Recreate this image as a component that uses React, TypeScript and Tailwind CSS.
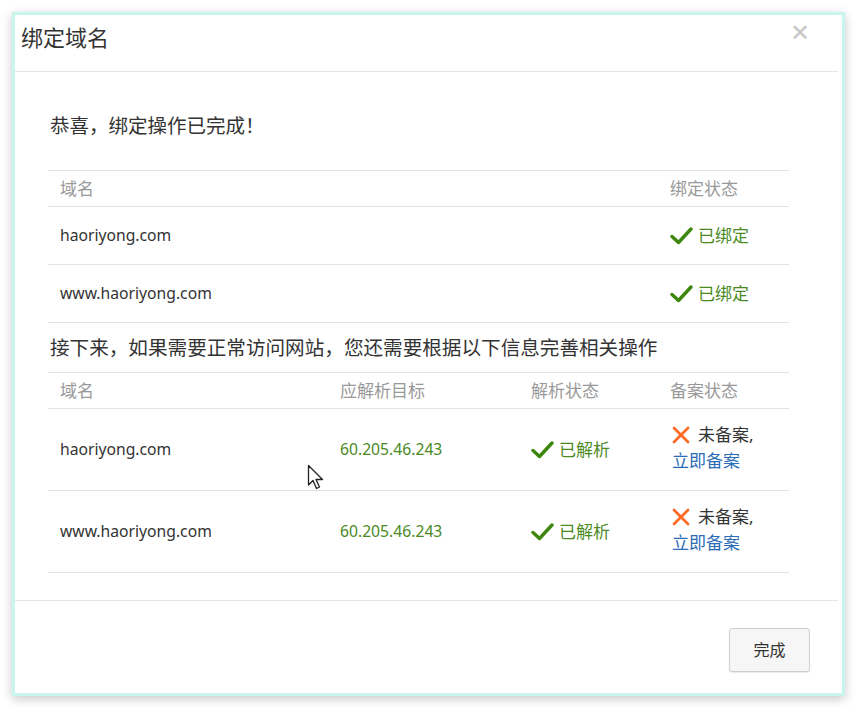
import React from 'react';

const cjk = { fontFamily: '"Noto Sans", "Noto Sans CJK SC", sans-serif' };

const Check = () => (
  <svg width="23" height="20" viewBox="0 0 23 20" className="shrink-0">
    <path d="M2 10.5 L8.5 16.5 L21 3" fill="none" stroke="#3d870f" strokeWidth="3.4" strokeLinecap="round" strokeLinejoin="round" />
  </svg>
);

const Cross = () => (
  <svg width="18" height="18" viewBox="0 0 18 18" className="shrink-0">
    <path d="M2 2 L16 16 M16 2 L2 16" stroke="#ff6a24" strokeWidth="2.8" strokeLinecap="round" />
  </svg>
);

const Cursor = () => (
  <svg width="20" height="28" viewBox="0 0 20 28" className="absolute left-[307px] top-[464px]">
    <path d="M1.5 1.5 L1.5 21 L6 16.5 L9.5 24.5 L12.5 23 L9 15.5 L15.5 15.5 Z" fill="#fff" stroke="#222" strokeWidth="1.3" strokeLinejoin="round" />
  </svg>
);

const bound = [
  { domain: 'haoriyong.com' },
  { domain: 'www.haoriyong.com' },
];

const resolve = [
  { domain: 'haoriyong.com', ip: '60.205.46.243' },
  { domain: 'www.haoriyong.com', ip: '60.205.46.243' },
];

export default function App() {
  return (
    <div className="relative w-[857px] h-[708px] bg-white" style={cjk}>
      <div className="absolute left-[12px] top-[12px] w-[833px] h-[684px] border-[3px] border-[#c9f6ec] bg-white shadow-[0_3px_10px_rgba(0,0,0,0.22)] flex flex-col">
        {/* header */}
        <div className="h-[57px] shrink-0 border-b border-[#e5e5e5] flex items-start justify-between pt-[7px] pl-[6px] pr-[28px] mr-[4px]">
          <span className="text-[22px] leading-[30px] text-[#333]">绑定域名</span>
          <span className="text-[24px] leading-[24px] -mt-[2px] text-[#c8c8c8] font-light">✕</span>
        </div>

        {/* body */}
        <div className="flex-1 px-[33px] pt-[41px] pb-[27px] border-b border-[#e5e5e5] mr-[4px]">
          <div className="text-[19.5px] leading-[26px] text-[#333] pl-[2px]">恭喜，绑定操作已完成！</div>

          <div className="mt-[31px] w-[741px] text-[17px]">
            <div className="grid grid-cols-[622px_1fr] h-[37px] items-center border-y border-[#e3e3e3] text-[#999]">
              <span className="pl-[12px]">域名</span>
              <span>绑定状态</span>
            </div>
            {bound.map((row) => (
              <div key={row.domain} className="grid grid-cols-[622px_1fr] h-[58px] items-center border-b border-[#e3e3e3]">
                <span className="pl-[12px] text-[15.7px] text-[#333]">{row.domain}</span>
                <span className="flex items-center gap-[5px] text-[#4b8a1f]">
                  <Check />
                  已绑定
                </span>
              </div>
            ))}
          </div>

          <div className="mt-[12px] text-[19.6px] leading-[26px] text-[#333] pl-[2px]">
            接下来，如果需要正常访问网站，您还需要根据以下信息完善相关操作
          </div>

          <div className="mt-[11px] w-[741px] text-[17px]">
            <div className="grid grid-cols-[280px_191px_139px_1fr] h-[37px] items-center border-y border-[#e3e3e3] text-[#999]">
              <span className="pl-[12px]">域名</span>
              <span className="pl-[12px]">应解析目标</span>
              <span className="pl-[12px]">解析状态</span>
              <span className="pl-[12px]">备案状态</span>
            </div>
            {resolve.map((row) => (
              <div key={row.domain} className="grid grid-cols-[280px_191px_139px_1fr] h-[82px] items-center border-b border-[#e3e3e3]">
                <span className="pl-[12px] text-[15.7px] text-[#333]">{row.domain}</span>
                <span className="pl-[12px] text-[15.7px] text-[#4b8a1f]">{row.ip}</span>
                <span className="pl-[12px] flex items-center gap-[5px] text-[#4b8a1f]">
                  <Check />
                  已解析
                </span>
                <div className="pl-[14px] leading-[26px] -mt-[3px]">
                  <div className="flex items-center gap-[8px] text-[#333]">
                    <Cross />
                    未备案,
                  </div>
                  <div className="text-[#2b6cb8]">立即备案</div>
                </div>
              </div>
            ))}
          </div>
        </div>

        {/* footer */}
        <div className="h-[95px] shrink-0 flex justify-end items-start pt-[27px] pr-[32px]">
          <button className="w-[81px] h-[44px] rounded-[3px] border border-[#cfcfcf] bg-[#f6f6f6] text-[16px] text-[#333] shadow-[0_1px_1px_rgba(0,0,0,0.08)]">
            完成
          </button>
        </div>
      </div>
      <Cursor />
    </div>
  );
}
